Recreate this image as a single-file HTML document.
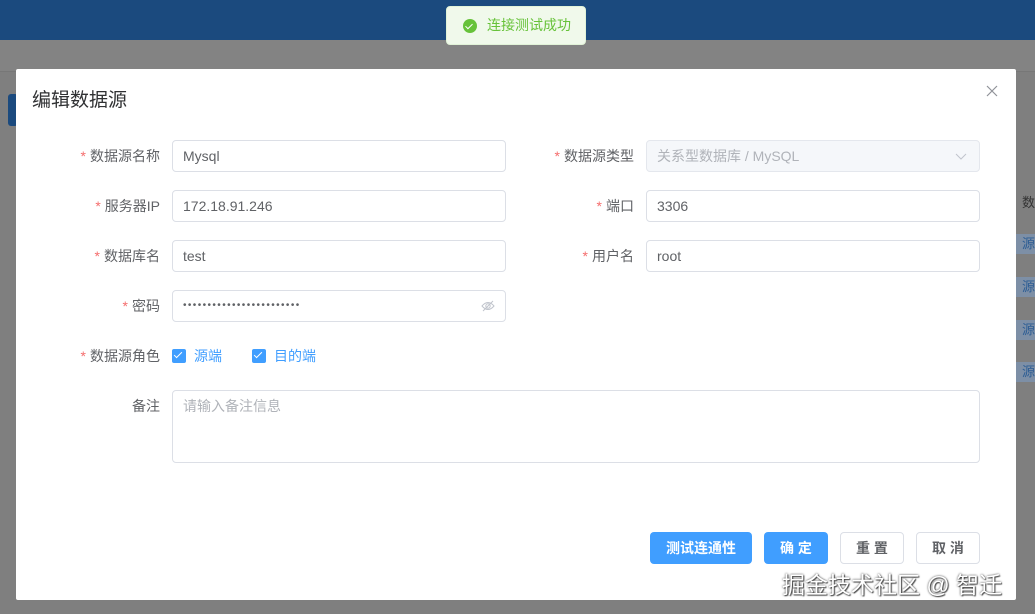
<!DOCTYPE html>
<html><head><meta charset="utf-8"><style>
*{box-sizing:border-box;margin:0;padding:0}
body{width:1035px;height:614px;overflow:hidden;background:#7f7f7f;font-family:"Liberation Sans","Noto Sans CJK SC",sans-serif;font-size:14px;color:#606266;position:relative}
.top{position:absolute;left:0;top:0;width:1035px;height:40px;background:#1b4a7e}
.sub{position:absolute;left:0;top:40px;width:1035px;height:32px;background:#838383;border-bottom:1px solid #777}
.bb{position:absolute;left:8px;top:94px;width:10px;height:32px;background:#1b4a7e;border-radius:3px}
.side{position:absolute;left:1016px;width:19px;height:20px;background:#7d8fa6;color:#2b5c94;font-size:13px;padding-left:6px;line-height:20px}
.toast{position:absolute;left:446px;top:6px;width:140px;height:39px;background:#f0f9eb;border:1px solid #e1f3d8;border-radius:4px;color:#67c23a;font-size:14px;line-height:37px;padding-left:40px}
.toast i{position:absolute;left:16px;top:12px;width:14px;height:14px;border-radius:50%;background:#67c23a}
.toast i:after{content:"";position:absolute;left:4px;top:3px;width:3px;height:6px;border:solid #fff;border-width:0 1.5px 1.5px 0;transform:rotate(45deg)}
.dlg{position:absolute;left:16px;top:69px;width:1000px;height:531px;background:#fff;border-radius:2px}
.title{position:absolute;left:16px;top:16px;font-size:19px;color:#303133}
.close{position:absolute;left:970px;top:16px}
.lab{position:absolute;text-align:right;width:140px;line-height:32px;color:#606266}
.lab b{color:#f56c6c;font-weight:normal;margin-right:4px}
.inp{position:absolute;height:32px;border:1px solid #dcdfe6;border-radius:4px;padding-left:10px;line-height:30px;color:#606266}
.btn{position:absolute;top:463px;height:32px;border-radius:4px;font-size:14px;font-weight:bold;text-align:center;line-height:32px}
.p{background:#409eff;color:#fff}
.d{border:1px solid #dcdfe6;color:#606266;line-height:30px}
.cb{position:absolute;top:280px;width:14px;height:14px;background:#409eff;border-radius:2px}
.cb:after{content:"";position:absolute;left:4px;top:1px;width:3px;height:7px;border:solid #fff;border-width:0 1px 1px 0;transform:rotate(45deg)}
.cl{position:absolute;top:277px;color:#409eff}
.wm{position:absolute;left:782px;top:566px;font-size:23px;color:#fff;text-shadow:0 0 2px #333,1px 1px 1px #555}
</style></head><body>
<div class="top"></div><div class="sub"></div><div class="bb"></div>
<div class="side" style="top:193px;background:none;color:#333">数</div>
<div class="side" style="top:234px">源</div>
<div class="side" style="top:277px">源</div>
<div class="side" style="top:320px">源</div>
<div class="side" style="top:362px">源</div>
<div class="dlg">
<div class="title">编辑数据源</div>
<svg class="close" width="12" height="12" viewBox="0 0 12 12"><path d="M1 1L11 11M11 1L1 11" stroke="#909399" stroke-width="1.2"/></svg>
<div class="lab" style="left:4px;top:71px"><b>*</b>数据源名称</div>
<div class="inp" style="left:156px;top:71px;width:334px">Mysql</div>
<div class="lab" style="left:478px;top:71px"><b>*</b>数据源类型</div>
<div class="inp" style="left:630px;top:71px;width:334px;background:#f5f7fa;border-color:#e4e7ed;color:#b0b3b9">关系型数据库 / MySQL<svg style="position:absolute;right:12px;top:12px" width="12" height="7" viewBox="0 0 12 7"><path d="M1 1L6 6L11 1" fill="none" stroke="#c0c4cc" stroke-width="1"/></svg></div>
<div class="lab" style="left:4px;top:121px"><b>*</b>服务器IP</div>
<div class="inp" style="left:156px;top:121px;width:334px">172.18.91.246</div>
<div class="lab" style="left:478px;top:121px"><b>*</b>端口</div>
<div class="inp" style="left:630px;top:121px;width:334px">3306</div>
<div class="lab" style="left:4px;top:171px"><b>*</b>数据库名</div>
<div class="inp" style="left:156px;top:171px;width:334px">test</div>
<div class="lab" style="left:478px;top:171px"><b>*</b>用户名</div>
<div class="inp" style="left:630px;top:171px;width:334px">root</div>
<div class="lab" style="left:4px;top:221px"><b>*</b>密码</div>
<div class="inp" style="left:156px;top:221px;width:334px;font-size:10px;letter-spacing:1.4px">••••••••••••••••••••••••<svg style="position:absolute;right:10px;top:9px" width="14" height="12" viewBox="0 0 14 12"><path d="M1 6Q7 -1 13 6Q7 13 1 6Z" fill="none" stroke="#c0c4cc"/><circle cx="7" cy="6" r="2.2" fill="none" stroke="#c0c4cc"/><path d="M2 11L12 1" stroke="#c0c4cc"/></svg></div>
<div class="lab" style="left:4px;top:271px"><b>*</b>数据源角色</div>
<div class="cb" style="left:156px"></div><div class="cl" style="left:178px">源端</div>
<div class="cb" style="left:236px"></div><div class="cl" style="left:258px">目的端</div>
<div class="lab" style="left:4px;top:321px">备注</div>
<div class="inp" style="left:156px;top:321px;width:808px;height:73px;color:#b0b3b9;line-height:30px">请输入备注信息</div>
<div class="btn p" style="left:634px;width:102px">测试连通性</div>
<div class="btn p" style="left:748px;width:64px">确 定</div>
<div class="btn d" style="left:824px;width:64px">重 置</div>
<div class="btn d" style="left:900px;width:64px">取 消</div>
</div>
<div class="toast"><i></i>连接测试成功</div>
<div class="wm">掘金技术社区 @ 智迁</div>
</body></html>
